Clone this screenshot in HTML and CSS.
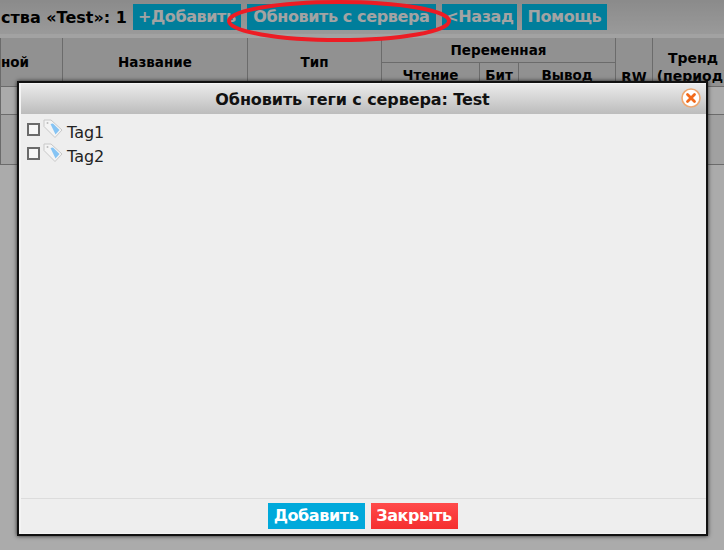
FILE: index.html
```html
<!DOCTYPE html>
<html>
<head>
    <title>Теги устройства</title>
    <link rel="stylesheet" href="styles.css">
</head>
<body>
<div class="toolbar">
    <span class="count">ства «Test»: 1</span>
    <a class="btn btn-add">+Добавить</a>
    <a class="btn btn-update">Обновить с сервера</a>
    <a class="btn btn-back">&lt;Назад</a>
    <a class="btn btn-help">Помощь</a>
</div>
<table class="tags">
    <colgroup>
        <col class="c-var"><col class="c-name"><col class="c-type"><col class="c-read"><col class="c-bit"><col class="c-out"><col class="c-rw"><col class="c-trend">
    </colgroup>
    <tr class="head-top">
        <th rowspan="2" class="first">ной</th>
        <th rowspan="2">Название</th>
        <th rowspan="2">Тип</th>
        <th colspan="3">Переменная</th>
        <th rowspan="2" class="rw">RW</th>
        <th rowspan="2" class="trend">Тренд<br>(период)</th>
    </tr>
    <tr class="head-sub">
        <th>Чтение</th>
        <th>Бит</th>
        <th>Вывод</th>
    </tr>
    <tr class="row-a"><td></td><td></td><td></td><td></td><td></td><td></td><td></td><td></td></tr>
    <tr class="row-b"><td></td><td></td><td></td><td></td><td></td><td></td><td></td><td></td></tr>
</table>

<div class="overlay"></div>

<svg class="mark" width="724" height="50" viewBox="0 0 724 50">
    <ellipse cx="339" cy="21" rx="110" ry="19" fill="none" stroke="#ed1c24" stroke-width="4"/>
</svg>

<div class="dialog">
    <div class="dialog-title">
        <span>Обновить теги с сервера: Test</span>
        <svg class="close" width="20" height="20" viewBox="0 0 20 20">
            <circle cx="10" cy="10" r="9" fill="#fff" stroke="#eda872" stroke-width="1.6"/>
            <path d="M6.5 6.5l7 7M13.500 6.500l-7 7" stroke="#f26a1b" stroke-width="2.800" stroke-linecap="round"/>
        </svg>
    </div>
    <div class="dialog-body">
        <div class="tree-item">
            <span class="check"></span>
            <svg class="tag-icon" width="20" height="20" viewBox="0 0 20 20">
                <path d="M1 1h7l11 10-7 7.500L1 7.500z" fill="#f4f4f4" stroke="#c8c8c8"/>
                <path d="M7.500 5l2.500-.5 6.500 6.500-4 4.500z" fill="#86c4f4"/>
                <circle cx="4.500" cy="4" r="1" fill="#bbb"/>
            </svg>
            <span class="tree-label">Tag1</span>
        </div>
        <div class="tree-item">
            <span class="check"></span>
            <svg class="tag-icon" width="20" height="20" viewBox="0 0 20 20">
                <path d="M1 1h7l11 10-7 7.500L1 7.500z" fill="#f4f4f4" stroke="#c8c8c8"/>
                <path d="M7.500 5l2.500-.5 6.500 6.500-4 4.500z" fill="#86c4f4"/>
                <circle cx="4.500" cy="4" r="1" fill="#bbb"/>
            </svg>
            <span class="tree-label">Tag2</span>
        </div>
    </div>
    <div class="dialog-foot">
        <a class="dlg-btn dlg-add">Добавить</a>
        <a class="dlg-btn dlg-close">Закрыть</a>
    </div>
</div>
</body>
</html>
```

FILE: styles.css
```css
html, body {
    padding:0;
    margin:0;
    height:100%;
    background:#FFFFFF;
    overflow:hidden;
    font-family: "DejaVu Sans", Verdana, sans-serif;
}

.toolbar {
    display:flex;
    align-items:center;
    height:34px;
    padding-left:1px;
    background:linear-gradient(#cfcfcf, #e6e6e6);
    border-bottom:4px solid #f2f2f2;
}

.count {
    font-size:16px;
    font-weight:bold;
    color:#000000;
    margin-right:6px;
    white-space:nowrap;
}

.btn {
    display:block;
    box-sizing:border-box;
    height:26px;
    line-height:26px;
    background:#00BCE8;
    color:#F4F4F4;
    font-size:16px;
    font-weight:bold;
    letter-spacing:-0.4px;
    text-align:center;
    white-space:nowrap;
    overflow:hidden;
}

.btn-add { width:108px; margin-right:6px; }
.btn-update { width:189px; margin-right:6px; }
.btn-back { width:75px; margin-right:5px; }
.btn-help { width:85px; }

.tags {
    border-collapse:collapse;
    table-layout:fixed;
    width:733px;
}

.c-var { width:62px; }
.c-name { width:185px; }
.c-type { width:134px; }
.c-read { width:98px; }
.c-bit { width:39px; }
.c-out { width:97px; }
.c-rw { width:37px; }
.c-trend { width:81px; }

.tags th, .tags td {
    border:1px solid #a0a0a0;
    padding:0;
    overflow:hidden;
    white-space:nowrap;
}

.tags th {
    background:#D8D8D8;
    font-size:13.5px;
    font-weight:bold;
    color:#000000;
    text-align:center;
}

.tags tr:first-child th { border-top:0; }

.head-top { height:24px; }
.head-sub { height:24px; }
.head-sub th { padding-top:2px; }
.row-a { height:28px; }
.row-b { height:50px; }
.row-b td { background:#F0F0F0; }

.tags th.first {
    text-align:right;
    padding-right:33px;
}

.tags th.rw {
    vertical-align:bottom;
    padding-bottom:1px;
}

.tags th.trend {
    padding-top:11px;
    font-size:14px;
    line-height:18px;
}

.overlay {
    position:absolute;
    top:0;
    left:0;
    right:0;
    bottom:0;
    background:rgba(0, 0, 0, 0.33);
}

.mark {
    position:absolute;
    top:0;
    left:0;
}

.dialog {
    position:absolute;
    top:81px;
    left:17px;
    width:691px;
    height:455px;
    box-sizing:border-box;
    display:flex;
    flex-direction:column;
    padding:1px 0 1px 2px;
    background:#F4F4F4;
    border:2px solid #111111;
    box-shadow:0 0 4px #222222;
}

.dialog-title {
    position:relative;
    flex:none;
    height:30px;
    line-height:32px;
    padding-right:22px;
    background:linear-gradient(#ebebeb, #bcbcbc);
    font-size:16px;
    font-weight:bold;
    letter-spacing:-0.1px;
    color:#111111;
    text-align:center;
}

.close {
    position:absolute;
    top:4px;
    right:5px;
}

.dialog-body {
    flex:1;
    padding:5px 6px;
    background:#EEEEEE;
}

.tree-item {
    display:flex;
    align-items:flex-start;
    height:24px;
}

.check {
    box-sizing:border-box;
    width:13px;
    height:13px;
    margin-top:4px;
    border:2px solid #6a6a6a;
    background:#f6f6f6;
}

.tag-icon {
    margin-left:3px;
}

.tree-label {
    margin-left:4px;
    margin-top:4px;
    font-size:16px;
    color:#222222;
}

.dialog-foot {
    flex:none;
    display:flex;
    justify-content:center;
    gap:6px;
    height:35px;
    padding-top:4px;
    padding-right:2px;
    box-sizing:border-box;
    background:#EEEEEE;
    border-top:1px solid #dcdcdc;
}

.dlg-btn {
    display:block;
    height:26px;
    line-height:26px;
    font-size:16px;
    font-weight:bold;
    letter-spacing:-0.4px;
    color:#FFFFFF;
    text-align:center;
}

.dlg-add { width:97px; background:#00A9DB; }
.dlg-close { width:87px; background:linear-gradient(#ff4a4a, #f52f2f); }
```
